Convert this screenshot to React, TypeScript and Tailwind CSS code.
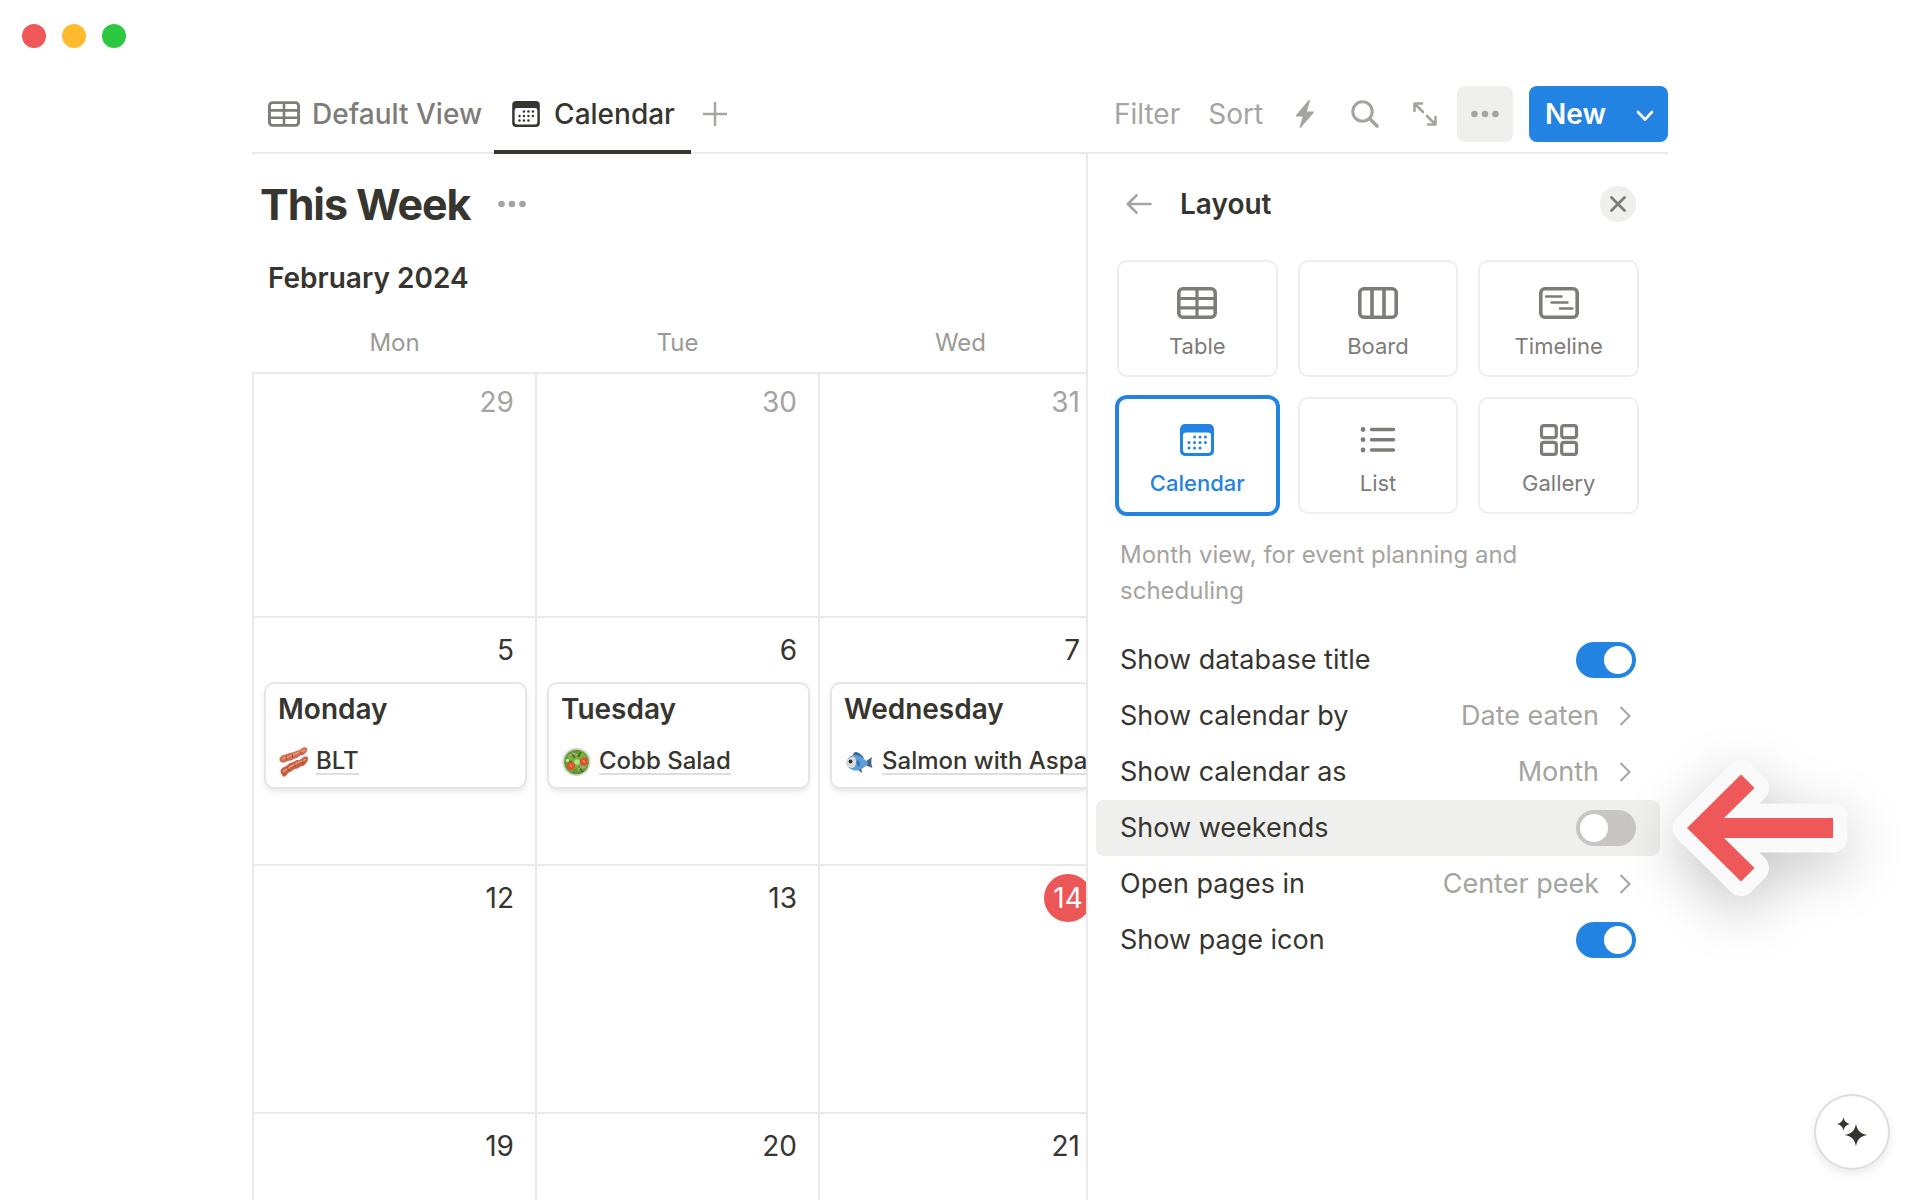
import { useState } from "react";
import type { ReactNode } from "react";

type TViewType = "Table" | "Board" | "Timeline" | "Calendar" | "List" | "Gallery";

interface IMealEvent {
  title: string;
  meal: string;
  icon: ReactNode;
}

interface IDay {
  date: number;
  muted?: boolean;
  today?: boolean;
  event?: IMealEvent;
}

const TableIcon = ({ className }: { className: string }) => (
  <svg viewBox="0 0 40 32" fill="none" stroke="currentColor" className={className}>
    <rect x="1.800" y="1.800" width="36.400" height="28.400" rx="4" strokeWidth="3.600" />
    <path d="M3 11.500H37M3 20.800H37M20 3V29" strokeWidth="3.200" />
  </svg>
);

const CalendarIcon = ({ className }: { className: string }) => (
  <svg viewBox="0 0 34 32" fill="currentColor" className={className}>
    <path
      fillRule="evenodd"
      d="M5 0H29a5 5 0 0 1 5 5V27a5 5 0 0 1-5 5H5a5 5 0 0 1-5-5V5a5 5 0 0 1 5-5ZM6 8.500a3 3 0 0 0-3 3V26a3 3 0 0 0 3 3H28a3 3 0 0 0 3-3V11.500a3 3 0 0 0-3-3Z"
    />
    {[
      [14.5, 13], [20, 13], [25.5, 13],
      [9, 18.5], [14.5, 18.5], [20, 18.5], [25.5, 18.5],
      [9, 24], [14.5, 24], [20, 24],
    ].map(([x, y]) => (
      <circle key={`${x}-${y}`} cx={x} cy={y} r="1.5" />
    ))}
  </svg>
);

const BoardIcon = ({ className }: { className: string }) => (
  <svg viewBox="0 0 40 32" fill="none" stroke="currentColor" className={className}>
    <rect x="1.800" y="1.800" width="36.400" height="28.400" rx="4" strokeWidth="3.600" />
    <path d="M14 3V29M26 3V29" strokeWidth="3.600" />
  </svg>
);

const TimelineIcon = ({ className }: { className: string }) => (
  <svg viewBox="0 0 40 32" fill="none" stroke="currentColor" className={className}>
    <rect x="1.800" y="1.800" width="36.400" height="28.400" rx="4" strokeWidth="3.600" />
    <path d="M7 9.500H22.500M12.500 15.500H28.500M21 21.500H33.500" strokeWidth="2.400" strokeLinecap="round" />
  </svg>
);

const ListIcon = ({ className }: { className: string }) => (
  <svg viewBox="0 0 40 32" fill="none" stroke="currentColor" className={className}>
    <path d="M13.500 5.500H35.500M13.500 15.700H35.500M13.500 26H35.500" strokeWidth="3.400" strokeLinecap="round" />
    <path d="M5 5.500h.01M5 15.700h.01M5 26h.01" strokeWidth="4.800" strokeLinecap="round" />
  </svg>
);

const GalleryIcon = ({ className }: { className: string }) => (
  <svg viewBox="0 0 40 32" fill="none" stroke="currentColor" strokeWidth="3.200" className={className}>
    <rect x="2.500" y="1.700" width="14.800" height="12" rx="2.500" />
    <rect x="22.700" y="1.700" width="14.800" height="12" rx="2.500" />
    <rect x="2.500" y="18.400" width="14.800" height="12" rx="2.500" />
    <rect x="22.700" y="18.400" width="14.800" height="12" rx="2.500" />
  </svg>
);

const DotsIcon = ({ className }: { className: string }) => (
  <svg viewBox="0 0 28 28" fill="currentColor" className={className}>
    <circle cx="3.500" cy="14" r="3.300" />
    <circle cx="14" cy="14" r="3.300" />
    <circle cx="24.500" cy="14" r="3.300" />
  </svg>
);

const ChevronRight = () => (
  <svg viewBox="0 0 12 20" fill="none" stroke="currentColor" strokeWidth="2" className="h-5 w-3">
    <path d="M1.500 1L10.500 10L1.500 19" />
  </svg>
);

const BaconIcon = () => (
  <svg viewBox="0 0 30 30" className="size-[30px] shrink-0">
    <path d="M2 10.500C4 7.500 7 8 10 6.500S15 6 17 4.500 21 4 23 2 28 0 29 1C30 4 28 6 26 7.500S23 7.500 21 9.500 17 11 15 12.500 13 13 9 14.500 5 16 3 15 1 12.500 2 10.500Z" fill="#cf7055" />
    <path d="M3 22.500C5 19.500 8 20 10 17.500S15 16 17 14 21 14 23 12 28 9 29.500 10C31 13 29 15 27 17.500S23 18.500 21 20.500 17 21 15 23 11 24.500 9 27.500 5 30 4 28 2 24.500 3 22.500Z" fill="#c65f43" />
    <path d="M4 12C7 10 9 11 12 9S17 8 19 6 23 5 27 3M5 25C8 22 10 22 12 20S17 18 19 16 24 15 28 12" fill="none" stroke="#e59c80" strokeWidth="1.500" />
    <path d="M8 9l1 4M14 7l1 4M22 4l1 3M9 20l2 4M16 17l2 3M24 13l1 4" stroke="#a9452d" strokeWidth=".9" />
  </svg>
);

const SaladIcon = () => (
  <svg viewBox="0 0 30 30" className="size-[30px] shrink-0">
    <circle cx="15.500" cy="15" r="14" fill="#d3d2d1" />
    <circle cx="15.500" cy="15" r="12.300" fill="#5c9a2c" />
    <path d="M6 9l5-5 4 4 6-4 5 6-4 4 5 4-6 6-6-3-5 4-5-7 4-3Z" fill="#7bb23a" />
    <path d="M10 6l4 5M20 5l-3 5M18 20l4 5M6 14l5 1" stroke="#3b7519" strokeWidth="2" />
    <path d="M17 24c1-4 4-5 7-3M9 9c2-3 5-3 7-1" fill="none" stroke="#c79aa4" strokeWidth="1.300" />
    <circle cx="10" cy="19" r="4.200" fill="#e0512f" />
    <circle cx="23" cy="14.500" r="4" fill="#e0512f" />
    <circle cx="16" cy="15" r="2.700" fill="#b9e08a" />
    <circle cx="6.500" cy="13.500" r="1.700" fill="#c8e6a0" />
    <path d="M9 18l2 2M22 13.500l2 2" stroke="#f3a27e" strokeWidth="1.400" />
  </svg>
);

const FishIcon = () => (
  <svg viewBox="0 0 30 30" className="size-[30px] shrink-0">
    <path d="M9 8C10 3 15 4 20 11L16 13Z" fill="#35658f" />
    <path d="M13 22l5 4-1-6Z" fill="#3f5a70" />
    <path d="M21 15L28 10C27 14 27 17 28.500 21L21 18Z" fill="#446583" />
    <path d="M2 16C4 10 8 7 13 8 17 9 21 12 24 16 21 21 15 24 10 23.500 5 22 3 19 2 16Z" fill="#5b9ddb" />
    <path d="M2 16C4 11 7 9 10 9.500 13 12 13 19 9 21 5 21 3 19 2 16Z" fill="#dadbd9" />
    <path d="M13 13c3 1 4 4 2 7-2-1-3-4-2-7Z" fill="#2f77b8" />
    <circle cx="6.500" cy="14.500" r="1.900" fill="#2a2c30" />
  </svg>
);

const weeks: IDay[][] = [
  [{ date: 29, muted: true }, { date: 30, muted: true }, { date: 31, muted: true }],
  [
    { date: 5, event: { title: "Monday", meal: "BLT", icon: <BaconIcon /> } },
    { date: 6, event: { title: "Tuesday", meal: "Cobb Salad", icon: <SaladIcon /> } },
    { date: 7, event: { title: "Wednesday", meal: "Salmon with Aspa", icon: <FishIcon /> } },
  ],
  [{ date: 12 }, { date: 13 }, { date: 14, today: true }],
  [{ date: 19 }, { date: 20 }, { date: 21 }],
];

const layouts: { name: TViewType; Icon: (props: { className: string }) => ReactNode }[] = [
  { name: "Table", Icon: TableIcon },
  { name: "Board", Icon: BoardIcon },
  { name: "Timeline", Icon: TimelineIcon },
  { name: "Calendar", Icon: CalendarIcon },
  { name: "List", Icon: ListIcon },
  { name: "Gallery", Icon: GalleryIcon },
];

const EventCard = ({ title, meal, icon }: IMealEvent) => (
  <div className="mt-[10px] mr-[10px] ml-3 h-[103px] rounded-lg bg-white px-3 pt-[7px] shadow-[0_0_0_2px_#e6e6e5,0_4px_6px_rgba(15,15,15,0.12)]">
    <h3 className="text-[28px] leading-9 font-semibold">{title}</h3>
    <a href="#" className="mt-5 flex items-center gap-2 text-2xl leading-8 font-medium whitespace-nowrap">
      {icon}
      <span className="border-b-2 border-[#dededc] leading-6">{meal}</span>
    </a>
  </div>
);

const Toolbar = () => (
  <header className="flex h-[72px] shrink-0 items-start justify-between border-b-2 border-[#e9e9e8]">
    <nav className="flex h-[72px] shrink-0 text-[28px] font-medium">
      <button className="flex h-16 items-center gap-3 pr-3 pl-4 text-[#7d7c78]">
        <TableIcon className="h-[26px] w-8" />
        Default View
      </button>
      <button className="flex h-[72px] items-center gap-[14px] border-b-4 border-[#37352f] pr-4 pb-1 pl-[18px]">
        <CalendarIcon className="h-[26px] w-7" />
        Calendar
      </button>
      <button aria-label="Add view" className="flex h-16 items-center px-3 text-[#a5a4a0]">
        <svg viewBox="0 0 24 24" fill="none" stroke="currentColor" strokeWidth="2.400" className="size-6">
          <path d="M12 0V24M0 12H24" />
        </svg>
      </button>
    </nav>
    <div className="flex h-16 items-center text-[28px] text-[#a5a4a0]">
      <button className="mr-7">Filter</button>
      <button className="mr-8">Sort</button>
      <button aria-label="Automations" className="mr-9">
        <svg viewBox="0 0 20 28" fill="currentColor" className="h-7 w-5">
          <path d="M13.500.3 1 15.200c-.5.7-.2 1.300.6 1.300h6.200L4.600 27c-.2.9.7 1.300 1.300.6L18.800 12.700c.5-.7.2-1.300-.6-1.300h-6.400L14.900 1c.2-.9-.8-1.400-1.400-.7Z" />
        </svg>
      </button>
      <button aria-label="Search" className="mr-[34px]">
        <svg viewBox="0 0 28 28" fill="none" stroke="currentColor" className="size-7">
          <circle cx="11.500" cy="11.500" r="9.700" strokeWidth="3" />
          <path d="M18.500 18.500L26 26" strokeWidth="3.600" strokeLinecap="round" />
        </svg>
      </button>
      <button aria-label="Expand" className="mr-5">
        <svg viewBox="0 0 24 24" fill="none" stroke="currentColor" strokeWidth="2.600" strokeLinejoin="round" strokeLinecap="round" className="size-6">
          <path d="M1.500 9V1.500H9M2 2L10 10M15 22.500H22.500V15M22 22L14 14" />
        </svg>
      </button>
      <button aria-label="View options" className="mr-4 flex size-14 items-center justify-center rounded-lg bg-[#efefee]">
        <DotsIcon className="size-7" />
      </button>
      <div className="flex h-14 overflow-hidden rounded-lg bg-[#2383e2] text-white">
        <button className="pl-4 pr-4 font-semibold">New</button>
        <button aria-label="New options" className="flex w-[46px] items-center justify-center">
          <svg viewBox="0 0 18 12" fill="none" stroke="currentColor" strokeWidth="2.600" strokeLinecap="round" strokeLinejoin="round" className="mt-1 h-3 w-[18px]">
            <path d="M2 2L9 9.500L16 2" />
          </svg>
        </button>
      </div>
    </div>
  </header>
);

const CalendarView = () => (
  <main className="min-w-0 flex-1 overflow-hidden">
    <div className="flex items-center gap-7 pt-[22px] pl-2">
      <h1 className="text-[43px] leading-[56px] font-bold tracking-tight">This Week</h1>
      <button aria-label="Database options" className="text-[#a5a4a0]">
        <DotsIcon className="size-7" />
      </button>
    </div>
    <h2 className="mt-[26px] pl-4 text-[28px] leading-10 font-semibold">February 2024</h2>
    <table className="mt-[15px] w-[851px] table-fixed border-collapse">
      <thead>
        <tr className="h-[60px] text-2xl text-[#9b9a97]">
          {["Mon", "Tue", "Wed"].map((day) => (
            <th key={day} className="p-0 font-normal">
              {day}
            </th>
          ))}
        </tr>
      </thead>
      <tbody>
        {weeks.map((week, index) => (
          <tr key={week[0].date} className={index === 0 ? "h-[244px]" : "h-[248px]"}>
            {week.map((day) => (
              <td key={day.date} className="border-2 border-[#e9e9e8] p-0 align-top text-[28px]">
                <div className={`flex justify-end pr-[9px] ${index === 0 ? "pt-1" : "pt-2"}`}>
                  <span
                    className={`flex h-12 items-center justify-center rounded-full ${
                      day.today ? "w-12 bg-[#eb5757] text-white" : "px-3"
                    } ${day.muted ? "text-[#a5a4a0]" : ""}`}
                  >
                    {day.date}
                  </span>
                </div>
                {day.event && <EventCard {...day.event} />}
              </td>
            ))}
          </tr>
        ))}
      </tbody>
    </table>
  </main>
);

// Sticker style arrow pointing at the row it is placed in
const PointerArrow = () => (
  <svg
    viewBox="0 0 176 138"
    className="pointer-events-none absolute top-1/2 left-full ml-2 h-[138px] w-[176px] -translate-y-1/2 overflow-visible drop-shadow-[0_16px_28px_rgba(15,15,15,0.24)]"
  >
    <path
      d="M19 69L73 15.500 86.500 29 56 59H165V79H56L86.500 109 73 122.500Z"
      fill="#fafafa"
      stroke="#fafafa"
      strokeWidth="29"
      strokeLinejoin="round"
    />
    <path d="M19 69L73 15.500 86.500 29 56 59H165V79H56L86.500 109 73 122.500Z" fill="#ee5858" />
  </svg>
);

interface ISwitchRowProps {
  label: string;
  defaultChecked?: boolean;
  highlighted?: boolean;
}

const SwitchRow = ({ label, defaultChecked = false, highlighted = false }: ISwitchRowProps) => (
  <label className={`relative flex h-14 items-center justify-between rounded-lg px-6 ${highlighted ? "bg-[#efefee]" : ""}`}>
    {label}
    <input
      type="checkbox"
      role="switch"
      defaultChecked={defaultChecked}
      className="h-9 w-[60px] appearance-none rounded-full bg-[#c7c6c4] p-1 before:block before:size-7 before:rounded-full before:bg-white checked:bg-[#2383e2] checked:before:translate-x-6"
    />
    {highlighted && <PointerArrow />}
  </label>
);

const ValueRow = ({ label, value }: { label: string; value: string }) => (
  <button className="flex h-14 w-full items-center px-6">
    {label}
    <span className="ml-auto flex items-center gap-5 pr-[5px] text-[#a5a4a0]">
      {value}
      <ChevronRight />
    </span>
  </button>
);

const LayoutPanel = () => {
  const [selected, setSelected] = useState<TViewType>("Calendar");

  return (
    <aside className="w-[582px] shrink-0 border-l-2 border-[#e9e9e8] pr-2 pl-2">
      <div className="flex items-center pt-8 pr-6 pl-[30px]">
        <button aria-label="Back" className="text-[#a5a4a0]">
          <svg viewBox="0 0 26 20" fill="none" stroke="currentColor" strokeWidth="2.600" strokeLinecap="round" strokeLinejoin="round" className="h-5 w-[26px]">
            <path d="M24.500 10H1.800M10.500 1.300L1.800 10L10.500 18.700" />
          </svg>
        </button>
        <h2 className="ml-7 text-[28px] leading-9 font-semibold">Layout</h2>
        <button aria-label="Close" className="ml-auto flex size-9 items-center justify-center rounded-full bg-[#efefee] text-[#7d7c78]">
          <svg viewBox="0 0 16 16" fill="none" stroke="currentColor" strokeWidth="2.800" strokeLinecap="round" className="size-4">
            <path d="M1.500 1.500L14.500 14.500M14.500 1.500L1.500 14.500" />
          </svg>
        </button>
      </div>
      <div className="mt-10 grid grid-cols-3 gap-6 px-[23px]">
        {layouts.map(({ name, Icon }) => (
          <button
            key={name}
            onClick={() => setSelected(name)}
            className={`flex h-[113px] flex-col items-center rounded-lg pt-[25px] text-[22px] leading-8 ${
              selected === name
                ? "font-medium text-[#2383e2] ring-4 ring-[#2383e2]"
                : "text-[#7d7c78] ring-2 ring-[#eeeeed]"
            }`}
          >
            <Icon className={name === "Calendar" ? "h-8 w-[34px]" : "h-8 w-10"} />
            <span className="mt-[11px]">{name}</span>
          </button>
        ))}
      </div>
      <p className="mt-[25px] px-6 text-2xl leading-9 text-[#a5a4a0]">Month view, for event planning and scheduling</p>
      <div className="mt-[23px] text-[27px]">
        <SwitchRow label="Show database title" defaultChecked />
        <ValueRow label="Show calendar by" value="Date eaten" />
        <ValueRow label="Show calendar as" value="Month" />
        <SwitchRow label="Show weekends" highlighted />
        <ValueRow label="Open pages in" value="Center peek" />
        <SwitchRow label="Show page icon" defaultChecked />
      </div>
    </aside>
  );
};

const App = () => {
  return (
    <div className="flex h-screen flex-col overflow-hidden bg-white font-['Inter',sans-serif] text-[#37352f]">
      <div className="flex h-[82px] shrink-0 gap-4 px-[22px] pt-6">
        <span className="size-6 rounded-full bg-[#ee5858]" />
        <span className="size-6 rounded-full bg-[#ffba2e]" />
        <span className="size-6 rounded-full bg-[#2bc840]" />
      </div>
      <div className="flex min-h-0 flex-1 flex-col px-[252px]">
        <Toolbar />
        <div className="flex min-h-0 flex-1">
          <CalendarView />
          <LayoutPanel />
        </div>
      </div>
      <button
        aria-label="Ask AI"
        className="fixed right-8 bottom-8 flex size-[72px] items-center justify-center rounded-full bg-white shadow-[0_0_0_2px_#dededd,0_4px_12px_rgba(15,15,15,0.12)]"
      >
        <svg viewBox="0 0 32 32" fill="currentColor" className="size-8">
          <path d="M20 7.500C21 14.500 24.500 18 31.500 19 24.500 20 21 23.500 20 30.500 19 23.500 15.500 20 8.500 19 15.500 18 19 14.500 20 7.500Z" />
          <path d="M7.500 1C8.200 5.300 10.200 7.300 14.500 8 10.200 8.700 8.200 10.700 7.500 15 6.800 10.700 4.800 8.700.5 8 4.800 7.300 6.800 5.300 7.500 1Z" />
        </svg>
      </button>
    </div>
  );
};

export default App;
